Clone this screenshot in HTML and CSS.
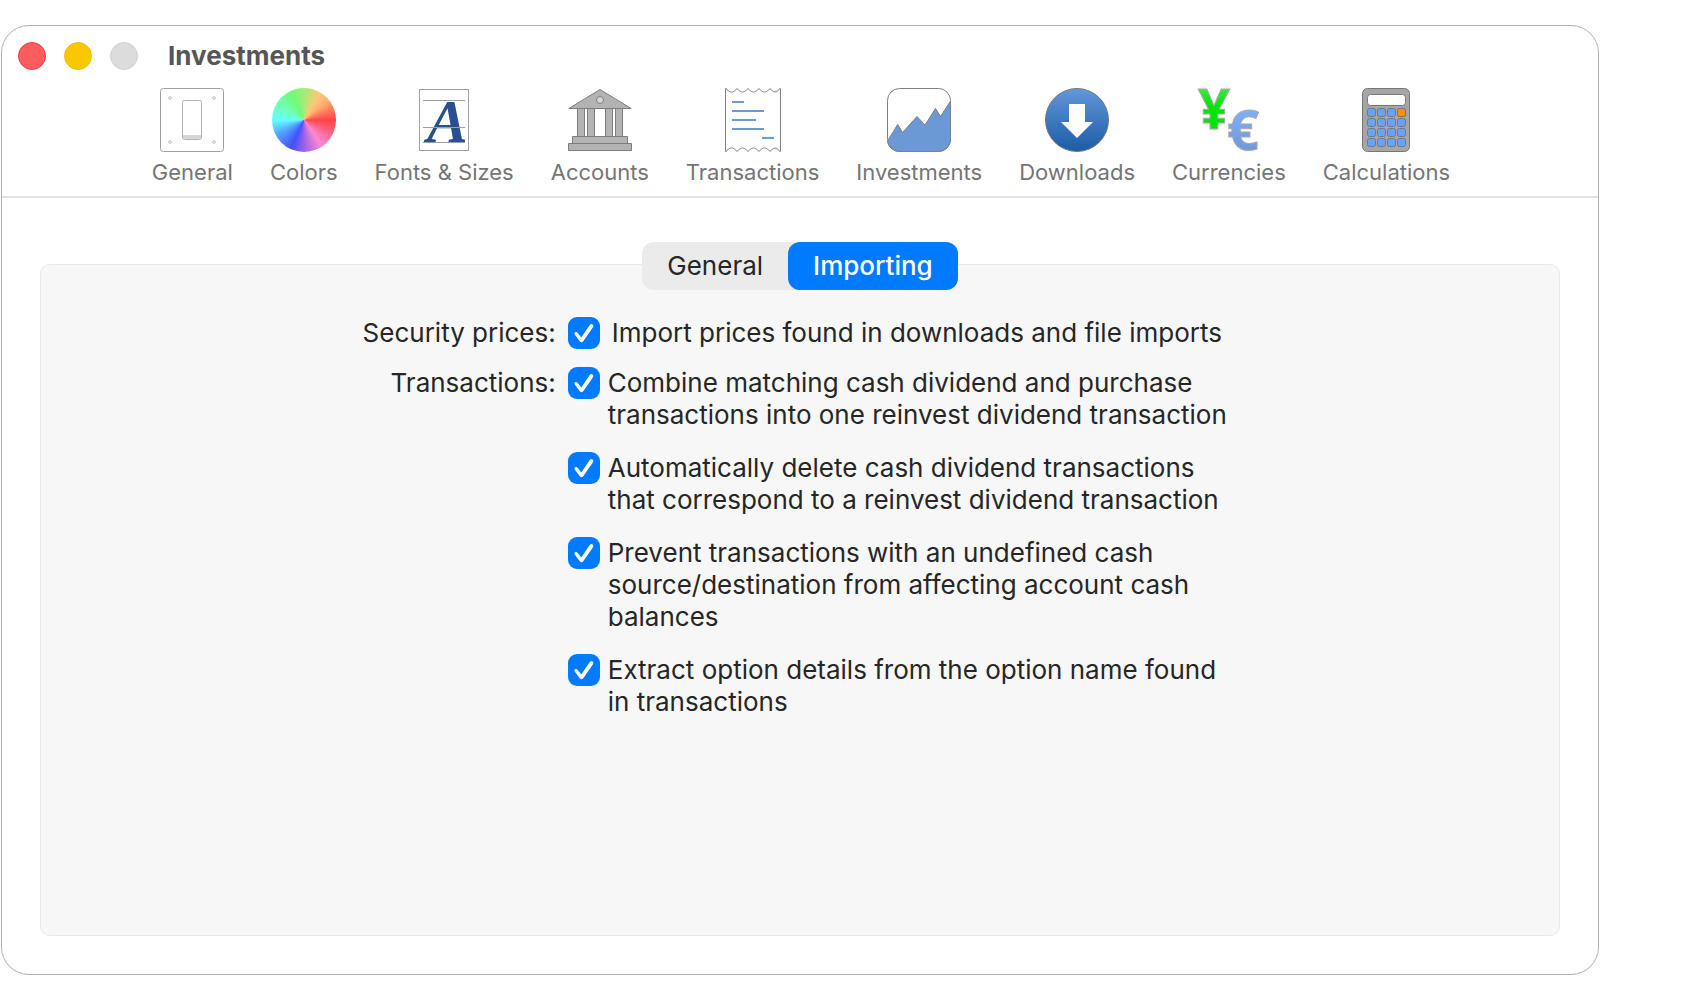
FILE: index.html
```html
<!DOCTYPE html>
<html lang="en">
<head>
<meta charset="utf-8">
<title>Investments</title>
<link rel="stylesheet" href="styles.css">
</head>
<body>
<main class="window">
  <header class="header">
    <div class="titlebar">
      <div class="lights">
        <button class="light light-close" aria-label="Close"></button>
        <button class="light light-minimize" aria-label="Minimize"></button>
        <button class="light light-zoom" aria-label="Zoom" disabled></button>
      </div>
      <h1 class="title">Investments</h1>
    </div>
    <nav class="toolbar">
      <button class="tool">
        <svg class="icon" viewBox="0 0 64 64" fill="none">
          <rect x=".5" y=".5" width="63" height="63" rx="3" stroke="#a0a0a0"/>
          <rect x="22.5" y="12.5" width="19" height="39" rx="2" stroke="#b4b4b4"/>
          <path d="M23 47h18v4H23z" fill="#d6d6d6"/>
          <g fill="#efefef" stroke="#c8c8c8"><circle cx="10" cy="10" r="1.5"/><circle cx="54" cy="10" r="1.5"/><circle cx="10" cy="54" r="1.5"/><circle cx="54" cy="54" r="1.5"/></g>
        </svg>
        <span>General</span>
      </button>
      <button class="tool">
        <span class="icon color-wheel"></span>
        <span>Colors</span>
      </button>
      <button class="tool">
        <svg class="icon" viewBox="0 0 64 64">
          <rect x="7.500" y="1.500" width="49" height="61" fill="#fff" stroke="#a0a0a0"/>
          <text class="glyph-a" x="15" y="54">A</text>
          <path d="M11 12.500h42M11 39.500h42M11 54.500h42" stroke="#a0a0a0"/>
        </svg>
        <span>Fonts &amp; Sizes</span>
      </button>
      <button class="tool">
        <svg class="icon" viewBox="0 0 64 64" fill="#b3b3b3" stroke="#7d7d7d">
          <path d="M.8 20.500 32 1.500l31.200 19z"/>
          <circle cx="32" cy="12" r="3.500" fill="#d8d8d8"/>
          <path d="M9.500 20.500h7v28h-7zM19.500 20.500h7v28h-7zM37.500 20.500h7v28h-7zM47.500 20.500h7v28h-7z"/>
          <path d="M4.500 48.500h55v7h-55zM.5 55.500h63v7H.5z"/>
        </svg>
        <span>Accounts</span>
      </button>
      <button class="tool">
        <svg class="icon" viewBox="0 0 64 64" fill="none">
          <path d="M4.500 63.500V.5q1.500 0 2 1.500c2 2.600 6 2.600 8 0q1.500-3 3 0c2 2.600 6 2.600 8 0q1.500-3 3 0c2 2.600 6 2.600 8 0q1.500-3 3 0c2 2.600 6 2.600 8 0q1.500-3 3 0c2 2.600 5 2.600 7 0q.5-1.500 2-1.500v63q-1.500 0-2-1.500c-2-2.600-5-2.600-7 0q-1.500 3-3 0c-2-2.600-6-2.600-8 0q-1.500 3-3 0c-2-2.600-6-2.600-8 0q-1.500 3-3 0c-2-2.600-6-2.600-8 0q-1.500 3-3 0c-2-2.600-6-2.600-8 0q-.5 1.500-2 1.500z" stroke="#808080"/>
          <path d="M11 14h12M11 23h32M11 32h24M11 41h32M41 50h12" stroke="#6b99d6" stroke-width="2"/>
        </svg>
        <span>Transactions</span>
      </button>
      <button class="tool">
        <svg class="icon" viewBox="0 0 64 64" stroke="#808080">
          <rect x=".5" y=".5" width="63" height="63" rx="12" fill="#fff"/>
          <path d="M.5 53 10.700 36.500l4.800 8L30 28.500l8 8.500 10.500-16.500 5 8L63.500 13v38.500a12 12 0 0 1-12 12h-39A12 12 0 0 1 .5 53z" fill="#6b99d6"/>
        </svg>
        <span>Investments</span>
      </button>
      <button class="tool">
        <svg class="icon" viewBox="0 0 64 64">
          <defs><linearGradient id="dl" x2="0" y2="1"><stop stop-color="#6397d8"/><stop offset="1" stop-color="#1c5ca6"/></linearGradient></defs>
          <circle cx="32" cy="32" r="31.500" fill="url(#dl)" stroke="#777"/>
          <path d="M24 16h16v18h8L32 50 16 34h8z" fill="#fff"/>
        </svg>
        <span>Downloads</span>
      </button>
      <button class="tool">
        <svg class="icon" viewBox="0 0 64 64">
          <defs>
            <linearGradient id="yen" x2="0" y2="1"><stop offset=".2" stop-color="#45ee45"/><stop offset=".5" stop-color="#00e400"/></linearGradient>
            <linearGradient id="euro" x2="0" y2="1"><stop offset=".2" stop-color="#7fb3ff"/><stop offset=".9" stop-color="#6b95d2"/></linearGradient>
          </defs>
          <text class="glyph-yen" x="1" y="41">¥</text>
          <text class="glyph-euro" x="30" y="62">€</text>
        </svg>
        <span>Currencies</span>
      </button>
      <button class="tool">
        <svg class="icon" viewBox="0 0 64 64" stroke="#777">
          <defs>
            <g id="keys"><rect x="13.500" width="8" height="8" rx="2"/><rect x="23.500" width="8" height="8" rx="2"/><rect x="33.500" width="8" height="8" rx="2"/><rect x="43.500" width="8" height="8" rx="2"/></g>
          </defs>
          <rect x="8.500" y=".5" width="47" height="63" rx="5" fill="#a6a6a6"/>
          <rect x="13.500" y="6.500" width="38" height="11" rx="3" fill="#fff"/>
          <g fill="#66a3ff"><use href="#keys" y="20.500"/><use href="#keys" y="30.500"/><use href="#keys" y="40.500"/><use href="#keys" y="50.500"/></g>
          <rect x="43.500" y="20.500" width="8" height="8" rx="2" fill="#ff9200"/>
        </svg>
        <span>Calculations</span>
      </button>
    </nav>
  </header>

  <section class="content">
    <div class="tabs" role="tablist">
      <button class="tab" role="tab" aria-selected="false">General</button>
      <button class="tab tab-active" role="tab" aria-selected="true">Importing</button>
    </div>
    <div class="panel">
      <div class="group">
        <span class="group-label">Security prices:</span>
        <div class="options">
          <label class="option option-single"><input class="check" type="checkbox" checked><span>Import prices found in downloads and file imports</span></label>
        </div>
      </div>
      <div class="group">
        <span class="group-label">Transactions:</span>
        <div class="options">
          <label class="option"><input class="check" type="checkbox" checked><span>Combine matching cash dividend and purchase<br>transactions into one reinvest dividend transaction</span></label>
          <label class="option"><input class="check" type="checkbox" checked><span>Automatically delete cash dividend transactions<br>that correspond to a reinvest dividend transaction</span></label>
          <label class="option"><input class="check" type="checkbox" checked><span>Prevent transactions with an undefined cash<br>source/destination from affecting account cash<br>balances</span></label>
          <label class="option"><input class="check" type="checkbox" checked><span>Extract option details from the option name found<br>in transactions</span></label>
        </div>
      </div>
    </div>
  </section>
</main>
</body>
</html>
```
FILE: styles.css
```css
* {
  box-sizing: border-box;
}

body {
  margin: 0;
  background: #fff;
  color: #262626;
  font-family: Inter, "Liberation Sans", sans-serif;
  font-size: 26px;
  line-height: 32px;
}

button {
  margin: 0;
  padding: 0;
  border: 0;
  background: none;
  color: inherit;
  font: inherit;
}

.window {
  display: flex;
  flex-direction: column;
  min-height: calc(100vh - 50px);
  margin: 25px 101px 25px 1px;
  border: 1px solid #b0b0b0;
  border-radius: 28px;
  background: #fff;
}

.header {
  padding-bottom: 8px;
  border-bottom: 2px solid #e3e3e3;
}

.titlebar {
  display: flex;
  align-items: center;
  gap: 30px;
  height: 60px;
  padding-left: 16px;
}

.lights {
  display: flex;
  gap: 18px;
}

.light {
  width: 28px;
  height: 28px;
  border: 1px solid;
  border-radius: 50%;
}

.light-close {
  background: #ff5c60;
  border-color: #f5373d;
}

.light-minimize {
  background: #fac800;
  border-color: #f0bf00;
}

.light-zoom {
  background: #dcdcdc;
  border-color: #d2d2d2;
}

.title {
  margin: 0;
  color: #565656;
  font-size: 26px;
  font-weight: 700;
}

.toolbar {
  display: flex;
  justify-content: center;
  gap: 37px;
  padding-top: 2px;
  padding-left: 2px;
}

.tool {
  display: flex;
  flex-direction: column;
  align-items: center;
  gap: 4px;
  color: #757575;
  font-size: 22px;
}

.icon {
  display: block;
  width: 64px;
  height: 64px;
  overflow: visible;
}

.color-wheel {
  border-radius: 50%;
  background: conic-gradient(#a0ee78, #fcc878 30deg, #ffb070 50deg, #ff4444 90deg, #ff88d0 145deg, #9a62e8 180deg, #4450ff 205deg, #55a0ff 240deg, #66ffff 270deg, #70ffb8 300deg, #70fa78 335deg, #a0ee78);
}

.glyph-a {
  fill: #294f8f;
  font: italic 700 61px "Liberation Serif", serif;
}

.glyph-yen {
  fill: url(#yen);
  stroke: #aaa;
  font: 700 56px "Open Sans", sans-serif;
}

.glyph-euro {
  fill: url(#euro);
  stroke: #aaa;
  font: 700 56px "Open Sans", sans-serif;
}

.content {
  display: flex;
  flex: 1;
  flex-direction: column;
  padding: 44px 38px;
  padding-bottom: 38px;
}

.tabs {
  z-index: 1;
  display: flex;
  align-self: center;
  margin-bottom: -26px;
  border-radius: 12px;
  background: #ebebeb;
}

.tab {
  height: 48px;
  padding: 0 25px;
  border-radius: 12px;
}

.tab-active {
  background: #007aff;
  color: #fff;
  font-weight: 500;
}

.panel {
  display: flex;
  flex: 1;
  flex-direction: column;
  gap: 18px;
  padding-top: 52px;
  border: 1px solid #e8e8e8;
  border-radius: 10px;
  background: #f7f7f7;
}

.group {
  display: grid;
  grid-template-columns: 34% 1fr;
  gap: 12px;
  padding-right: 4px;
}

.group-label {
  text-align: right;
}

.options {
  display: flex;
  flex-direction: column;
  gap: 21px;
}

.option {
  display: flex;
  gap: 8px;
}

.option-single {
  gap: 12px;
}

.check {
  display: grid;
  flex: none;
  place-items: center;
  width: 32px;
  height: 32px;
  margin: 0;
  border-radius: 9px;
  background: #007aff;
  appearance: none;
}

.check:checked::before {
  content: "";
  width: 20px;
  height: 20px;
  background: #fff;
  clip-path: path("M1 11.500Q0 9.500 2 9q1-.3 2 1l3.500 4.500L16 2q1.300-1.500 2.800-.6 1.500 1 .6 2.600L9.500 18.300q-1.700 2-3.500 0z");
}
```
